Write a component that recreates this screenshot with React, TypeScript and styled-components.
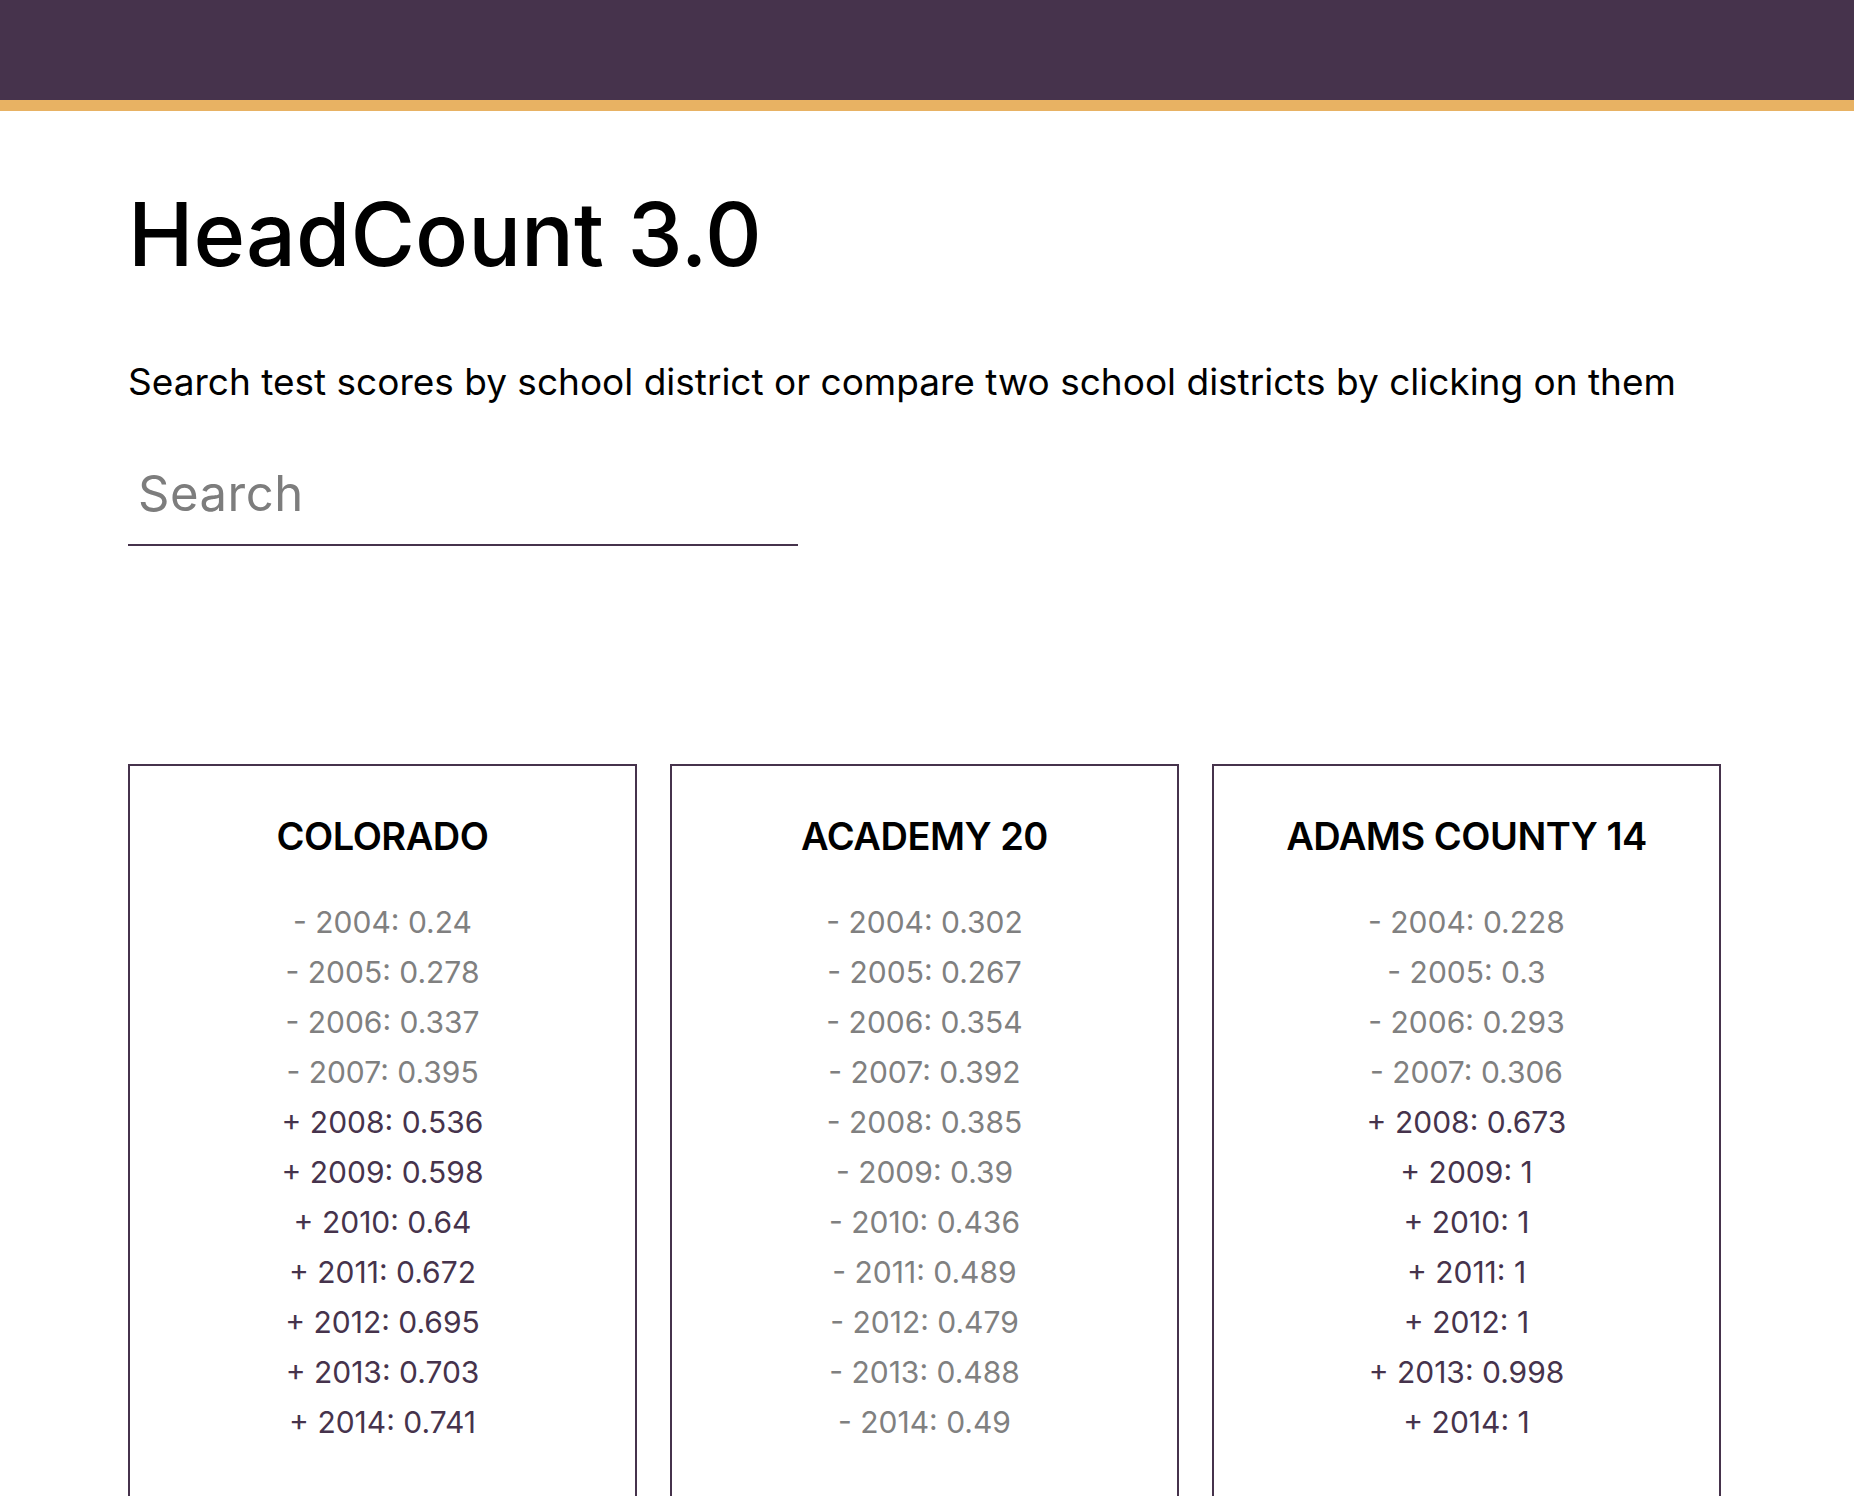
import React, { useState } from "react";
import styled, { createGlobalStyle } from "styled-components";

type Score = {
  year: number;
  value: number;
};
type District = {
  name: string;
  scores: Score[];
};

const years = [2004, 2005, 2006, 2007, 2008, 2009, 2010, 2011, 2012, 2013, 2014];

const toScores = (values: number[]): Score[] =>
  values.map((value, i) => ({ year: years[i], value }));

const districts: District[] = [
  {
    name: "COLORADO",
    scores: toScores([0.24, 0.278, 0.337, 0.395, 0.536, 0.598, 0.64, 0.672, 0.695, 0.703, 0.741]),
  },
  {
    name: "ACADEMY 20",
    scores: toScores([0.302, 0.267, 0.354, 0.392, 0.385, 0.39, 0.436, 0.489, 0.479, 0.488, 0.49]),
  },
  {
    name: "ADAMS COUNTY 14",
    scores: toScores([0.228, 0.3, 0.293, 0.306, 0.673, 1, 1, 1, 1, 0.998, 1]),
  },
];

const GlobalStyle = createGlobalStyle`
  body {
    margin: 0;
    background: #fff;
    font-family: "Inter", "Open Sans", sans-serif;
  }
`;

const Header = styled.header`
  height: 100px;
  background-color: #46334c;
  border-bottom: 11px solid #e8b263;
`;

const Main = styled.main`
  padding: 58px 128px 0;
`;

const Title = styled.h1`
  margin: 0;
  font-size: 88px;
  font-weight: 500;
  letter-spacing: 0;
  color: #000;
  line-height: 130px;
`;

const Intro = styled.p`
  margin: 58px 0 0;
  font-size: 37px;
  font-weight: 400;
  color: #000;
  line-height: 50px;
`;

const SearchInput = styled.input`
  display: block;
  box-sizing: border-box;
  width: 670px;
  height: 103px;
  margin-top: 36px;
  padding: 0 10px;
  border: none;
  border-bottom: 2px solid #46334c;
  outline: none;
  font-family: "Inter", sans-serif;
  font-size: 49px;
  letter-spacing: 0.5px;
  color: #000;
  background: transparent;

  &::placeholder {
    color: #7d7d7d;
  }
`;

const CardGrid = styled.section`
  display: grid;
  grid-template-columns: repeat(3, 509px);
  gap: 33px;
  margin-top: 218px;
`;

const Card = styled.article`
  box-sizing: border-box;
  border: 2px solid #46334c;
  padding: 44px 0 100px;
  text-align: center;
  cursor: pointer;
`;

const CardTitle = styled.h2`
  margin: 0 0 35px;
  font-size: 38px;
  font-weight: 600;
  letter-spacing: -0.5px;
  color: #000;
  line-height: 52px;
`;

const ScoreList = styled.ul`
  list-style: none;
  margin: 0;
  padding: 0;
`;

const ScoreRow = styled.li<{ $up: boolean }>`
  font-size: 30px;
  line-height: 50px;
  font-weight: 400;
  color: ${({ $up }) => ($up ? "#46334c" : "#808080")};
`;

const App = () => {
  const [query, setQuery] = useState("");

  const shown = districts.filter((d) =>
    d.name.toLowerCase().includes(query.toLowerCase())
  );

  return (
    <>
      <GlobalStyle />
      <Header />
      <Main>
        <Title>HeadCount 3.0</Title>
        <Intro>
          Search test scores by school district or compare two school districts by clicking on them
        </Intro>
        <SearchInput
          placeholder="Search"
          value={query}
          onChange={(e) => setQuery(e.target.value)}
        />
        <CardGrid>
          {shown.map((district) => (
            <Card key={district.name}>
              <CardTitle>{district.name}</CardTitle>
              <ScoreList>
                {district.scores.map((score) => {
                  const up = score.value > 0.5;
                  return (
                    <ScoreRow key={score.year} $up={up}>
                      {up ? "+" : "-"} {score.year}: {score.value}
                    </ScoreRow>
                  );
                })}
              </ScoreList>
            </Card>
          ))}
        </CardGrid>
      </Main>
    </>
  );
};

export default App;
